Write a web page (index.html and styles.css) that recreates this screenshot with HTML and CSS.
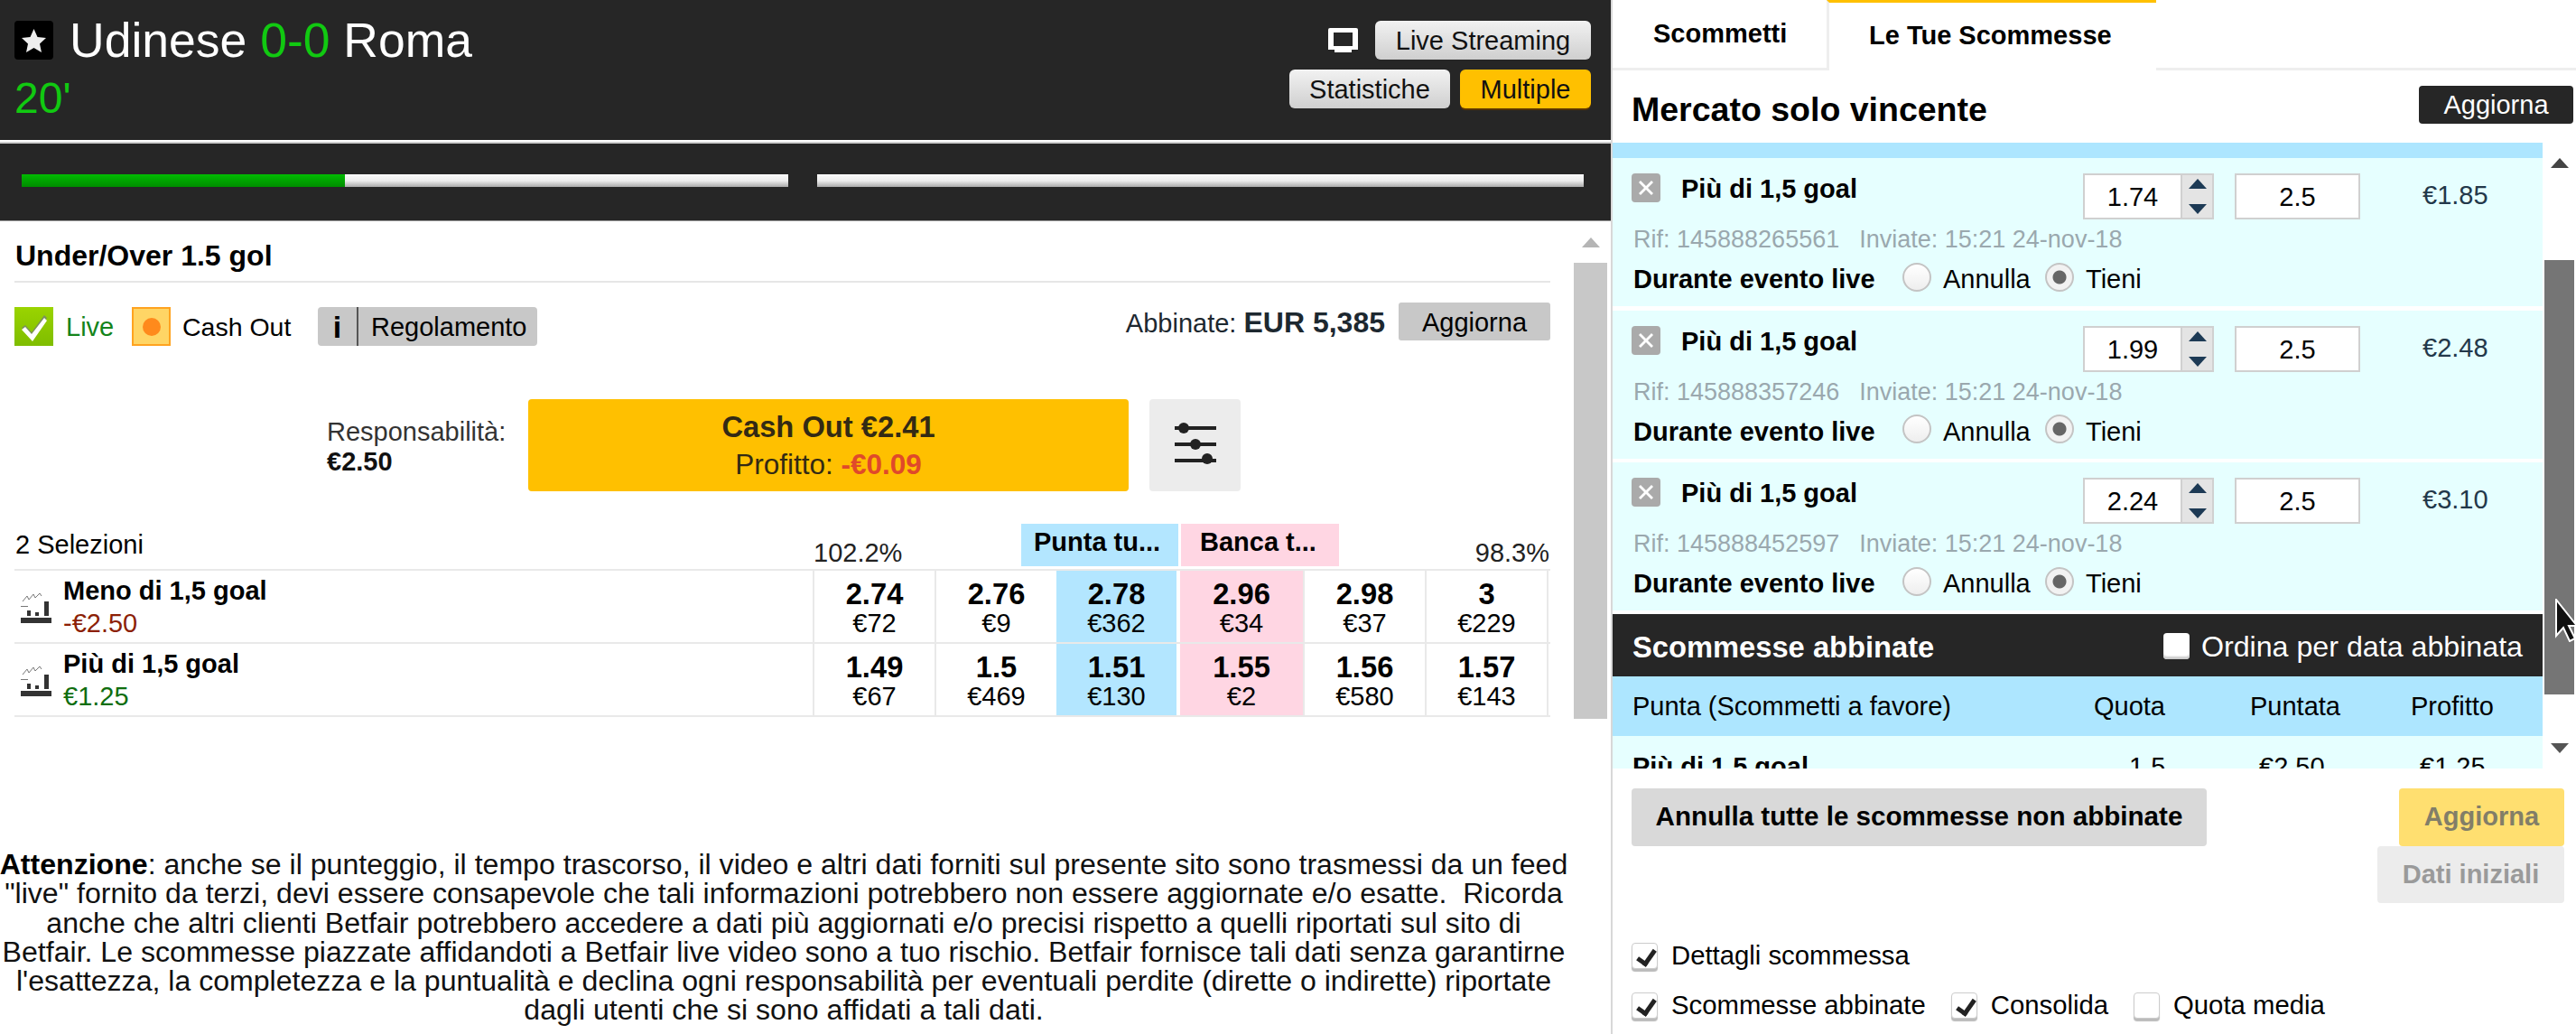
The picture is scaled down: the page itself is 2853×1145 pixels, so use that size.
FILE: index.html
```html
<!DOCTYPE html>
<html lang="it">
<head>
    <meta charset="UTF-8">
    <title>Udinese 0-0 Roma</title>
    <link rel="stylesheet" href="styles.css">
</head>
<body>
<div class="app">
    <div class="left">
        <div class="match-head">
            <div class="match-info">
                <div class="match-title">
                    <span class="star-box"><svg width="43" height="43" viewBox="0 0 43 43"><path d="M21.5 9l4 9 9.500 1-7 6.500 2 9.500-8.500-5-8.500 5 2-9.500-7-6.500 9.500-1z" fill="#eee"/></svg></span>
                    <span class="teams">Udinese <span class="score">0-0</span> Roma</span>
                </div>
                <div class="match-time">20'</div>
            </div>
            <div class="match-actions">
                <div class="action-row">
                    <svg class="tv-icon" width="33" height="27" viewBox="0 0 33 27"><path d="M2 0h29a2 2 0 0 1 2 2v22h-7v3H7v-3H0V2a2 2 0 0 1 2-2z" fill="#fff"/><rect x="6" y="5" width="21" height="15" fill="#262626"/></svg>
                    <span class="head-btn btn-streaming">Live Streaming</span>
                </div>
                <div class="action-row action-row-tight">
                    <span class="head-btn btn-stats">Statistiche</span>
                    <span class="head-btn btn-multi">Multiple</span>
                </div>
            </div>
        </div>
        <div class="head-sep"></div>
        <div class="progress">
            <div class="bar"><div class="bar-fill"></div></div>
            <div class="bar"></div>
        </div>

        <div class="market">
            <div class="market-main">
                <div class="market-title">Under/Over 1.5 gol</div>
                <div class="filter-row">
                    <div class="filter-left">
                        <span class="ico-live"><svg width="43" height="43" viewBox="0 0 43 43"><path d="M8 23l4-3 7 8L33 9l3 3-16 24z" fill="#7a8f60"/><path d="M8 25l4-3 7 8L33 12l3 3-16 23z" fill="#fff"/></svg></span>
                        <span class="live-text">Live</span>
                        <span class="ico-cash"><span class="ico-cash-dot"></span></span>
                        <span class="cash-text">Cash Out</span>
                        <span class="rules-btn"><span class="rules-i">i</span><span class="rules-label">Regolamento</span></span>
                    </div>
                    <div class="filter-right">
                        <span class="matched">Abbinate: <b>EUR 5,385</b></span>
                        <span class="refresh-btn">Aggiorna</span>
                    </div>
                </div>
                <div class="cash-row">
                    <div class="liability">Responsabilità:<br><b>€2.50</b></div>
                    <div class="cash-btn">
                        <div class="cash-main">Cash Out €2.41</div>
                        <div class="cash-sub">Profitto: <b>-€0.09</b></div>
                    </div>
                    <div class="sliders-btn">
                        <svg class="sliders-icon" width="46" height="46" viewBox="0 0 46 46" fill="#222"><rect y="4" width="46" height="4"/><rect y="22" width="46" height="4"/><rect y="40" width="46" height="4"/><circle cx="10" cy="6" r="6"/><circle cx="23" cy="24" r="6"/><circle cx="36" cy="40" r="6"/></svg>
                    </div>
                </div>
                <div class="sel-head">
                    <span class="sel-count">2 Selezioni</span>
                    <span class="pct pct-left">102.2%</span>
                    <span class="side-tab side-back">Punta tu...</span>
                    <span class="side-tab side-lay">Banca t...</span>
                    <span class="pct pct-right">98.3%</span>
                </div>
                <div class="runner">
                    <div class="runner-name">
                        <svg class="chart-icon" width="36" height="36" viewBox="0 0 36 36"><path d="M3 12l5-6 2 4 5-6 2 4 5-5 2 3" fill="none" stroke="#777" stroke-width="1"/><path d="M1 17h8v1H1z" fill="#777"/><path d="M8 22h4v6H8zM17 24h4v4h-4zM27 12h5v16h-5zM1 30h34v6H1z" fill="#333"/></svg>
                        <div>
                            <div class="runner-title">Meno di 1,5 goal</div>
                            <div class="runner-pl loss">-€2.50</div>
                        </div>
                    </div>
                    <div class="cell"><b>2.74</b><span>€72</span></div>
                    <div class="cell"><b>2.76</b><span>€9</span></div>
                    <div class="cell cell-back"><b>2.78</b><span>€362</span></div>
                    <div class="cell cell-lay"><b>2.96</b><span>€34</span></div>
                    <div class="cell"><b>2.98</b><span>€37</span></div>
                    <div class="cell"><b>3</b><span>€229</span></div>
                </div>
                <div class="runner">
                    <div class="runner-name">
                        <svg class="chart-icon" width="36" height="36" viewBox="0 0 36 36"><path d="M3 12l5-6 2 4 5-6 2 4 5-5 2 3" fill="none" stroke="#777" stroke-width="1"/><path d="M1 17h8v1H1z" fill="#777"/><path d="M8 22h4v6H8zM17 24h4v4h-4zM27 12h5v16h-5zM1 30h34v6H1z" fill="#333"/></svg>
                        <div>
                            <div class="runner-title">Più di 1,5 goal</div>
                            <div class="runner-pl win">€1.25</div>
                        </div>
                    </div>
                    <div class="cell"><b>1.49</b><span>€67</span></div>
                    <div class="cell"><b>1.5</b><span>€469</span></div>
                    <div class="cell cell-back"><b>1.51</b><span>€130</span></div>
                    <div class="cell cell-lay"><b>1.55</b><span>€2</span></div>
                    <div class="cell"><b>1.56</b><span>€580</span></div>
                    <div class="cell"><b>1.57</b><span>€143</span></div>
                </div>
            </div>
            <div class="market-scroll">
                <span class="arrow-up arrow-light"></span>
                <span class="market-thumb"></span>
            </div>
        </div>

        <p class="notice"><b>Attenzione</b>: anche se il punteggio, il tempo trascorso, il video e altri dati forniti sul presente sito sono trasmessi da un feed "live" fornito da terzi, devi essere consapevole che tali informazioni potrebbero non essere aggiornate e/o esatte.&nbsp; Ricorda anche che altri clienti Betfair potrebbero accedere a dati più aggiornati e/o precisi rispetto a quelli riportati sul sito di Betfair. Le scommesse piazzate affidandoti a Betfair live video sono a tuo rischio. Betfair fornisce tali dati senza garantirne l'esattezza, la completezza e la puntualità e declina ogni responsabilità per eventuali perdite (dirette o indirette) riportate dagli utenti che si sono affidati a tali dati.</p>
    </div>

    <div class="right">
        <div class="tabs">
            <div class="tab">Scommetti</div>
            <div class="tab tab-active">Le Tue Scommesse</div>
        </div>
        <div class="slip-head">
            <span class="slip-title">Mercato solo vincente</span>
            <span class="slip-refresh">Aggiorna</span>
        </div>
        <div class="slip-body">
            <div class="slip-list">
                <div class="slip-band"></div>

                <div class="bet">
                    <div class="bet-top">
                        <span class="bet-x"><svg width="32" height="32" viewBox="0 0 32 32"><path d="M10 8l6 6 6-6 2 2-6 6 6 6-2 2-6-6-6 6-2-2 6-6-6-6z" fill="#fff"/></svg></span>
                        <span class="bet-name">Più di 1,5 goal</span>
                        <span class="odds-box">1.74</span>
                        <span class="spinner"><i class="spin-up"></i><i class="spin-down"></i></span>
                        <span class="stake-box">2.5</span>
                        <span class="bet-price">€1.85</span>
                    </div>
                    <div class="bet-ref"><span class="ref-id">Rif: 145888265561</span><span>Inviate: 15:21 24-nov-18</span></div>
                    <div class="bet-live">
                        <b class="live-label">Durante evento live</b>
                        <span class="radio"></span><span class="radio-text">Annulla</span>
                        <span class="radio radio-on"></span><span class="radio-text">Tieni</span>
                    </div>
                </div>

                <div class="bet">
                    <div class="bet-top">
                        <span class="bet-x"><svg width="32" height="32" viewBox="0 0 32 32"><path d="M10 8l6 6 6-6 2 2-6 6 6 6-2 2-6-6-6 6-2-2 6-6-6-6z" fill="#fff"/></svg></span>
                        <span class="bet-name">Più di 1,5 goal</span>
                        <span class="odds-box">1.99</span>
                        <span class="spinner"><i class="spin-up"></i><i class="spin-down"></i></span>
                        <span class="stake-box">2.5</span>
                        <span class="bet-price">€2.48</span>
                    </div>
                    <div class="bet-ref"><span class="ref-id">Rif: 145888357246</span><span>Inviate: 15:21 24-nov-18</span></div>
                    <div class="bet-live">
                        <b class="live-label">Durante evento live</b>
                        <span class="radio"></span><span class="radio-text">Annulla</span>
                        <span class="radio radio-on"></span><span class="radio-text">Tieni</span>
                    </div>
                </div>

                <div class="bet bet-last">
                    <div class="bet-top">
                        <span class="bet-x"><svg width="32" height="32" viewBox="0 0 32 32"><path d="M10 8l6 6 6-6 2 2-6 6 6 6-2 2-6-6-6 6-2-2 6-6-6-6z" fill="#fff"/></svg></span>
                        <span class="bet-name">Più di 1,5 goal</span>
                        <span class="odds-box">2.24</span>
                        <span class="spinner"><i class="spin-up"></i><i class="spin-down"></i></span>
                        <span class="stake-box">2.5</span>
                        <span class="bet-price">€3.10</span>
                    </div>
                    <div class="bet-ref"><span class="ref-id">Rif: 145888452597</span><span>Inviate: 15:21 24-nov-18</span></div>
                    <div class="bet-live">
                        <b class="live-label">Durante evento live</b>
                        <span class="radio"></span><span class="radio-text">Annulla</span>
                        <span class="radio radio-on"></span><span class="radio-text">Tieni</span>
                    </div>
                </div>

                <div class="matched-head">
                    <b>Scommesse abbinate</b>
                    <span class="matched-sort"><span class="check check-flat"></span>Ordina per data abbinata</span>
                </div>
                <div class="matched-cols">
                    <span class="col-side">Punta (Scommetti a favore)</span>
                    <span class="col-odds">Quota</span>
                    <span class="col-stake">Puntata</span>
                    <span class="col-profit">Profitto</span>
                </div>
                <div class="matched-row">
                    <b class="col-side">Più di 1,5 goal</b>
                    <span class="col-odds">1.5</span>
                    <span class="col-stake">€2.50</span>
                    <span class="col-profit">€1.25</span>
                </div>
            </div>
            <div class="slip-scroll">
                <span class="arrow-up"></span>
                <span class="slip-thumb"></span>
                <span class="arrow-down"></span>
            </div>
        </div>
        <div class="slip-actions">
            <span class="cancel-all">Annulla tutte le scommesse non abbinate</span>
            <div class="slip-actions-right">
                <span class="update-btn">Aggiorna</span>
                <span class="reset-btn">Dati iniziali</span>
            </div>
        </div>
        <div class="options">
            <div class="option-row">
                <span class="check check-on"></span><span class="option-label">Dettagli scommessa</span>
            </div>
            <div class="option-row">
                <span class="check check-on"></span><span class="option-label">Scommesse abbinate</span>
                <span class="check check-on"></span><span class="option-label">Consolida</span>
                <span class="check"></span><span class="option-label">Quota media</span>
            </div>
        </div>
    </div>

    <svg class="cursor" width="24" height="48" viewBox="0 0 24 48"><path d="M1 1v40l8-9 7 15 6-3-7-14h9z" fill="#111" stroke="#fff" stroke-width="2"/></svg>
</div>
</body>
</html>
```

FILE: styles.css
```css
* {
    box-sizing: border-box;
}
html, body {
    margin: 0;
    padding: 0;
}
body {
    font-family: "Liberation Sans", Arial, sans-serif;
    font-size: 29px;
    color: #000;
    background: #fff;
}
.app {
    position: relative;
    display: flex;
    width: 2853px;
    height: 1145px;
    overflow: hidden;
}
.left {
    width: 1784px;
    flex: none;
}
.right {
    width: 1069px;
    flex: none;
    border-left: 2px solid #d8d8d8;
}

/* match header */
.match-head {
    height: 155px;
    background: #262626;
    display: flex;
    justify-content: space-between;
    padding: 23px 22px 0 16px;
}
.match-title {
    display: flex;
    align-items: center;
    height: 43px;
}
.star-box {
    width: 43px;
    height: 43px;
    background: #000;
    border-radius: 4px;
    margin-right: 18px;
}
.teams {
    font-size: 53.500px;
    line-height: 43px;
    color: #fff;
}
.score,
.match-time {
    color: #11c911;
}
.match-time {
    font-size: 48px;
    line-height: 50px;
    margin-top: 18px;
}
.match-actions {
    display: flex;
    flex-direction: column;
    align-items: flex-end;
    gap: 11px;
}
.action-row {
    display: flex;
    align-items: center;
    gap: 19px;
}
.action-row-tight {
    gap: 11px;
}
.head-btn {
    height: 43px;
    line-height: 45px;
    text-align: center;
    border-radius: 6px;
    background: linear-gradient(#f2f2f2, #cfcfcf);
    color: #111;
}
.btn-streaming {
    width: 239px;
}
.btn-stats {
    width: 178px;
}
.btn-multi {
    width: 145px;
    background: #ffc000;
    box-shadow: 0 2px 0 #5a3500;
}
.head-sep {
    height: 4px;
    background: #cfcfcf;
    border-top: 2px solid #fff;
}
.progress {
    height: 86px;
    background: #262626;
    display: flex;
    gap: 32px;
    padding: 34px 0 0 24px;
    border-bottom: 1px solid #999;
}
.bar {
    width: 849px;
    height: 14px;
    background: linear-gradient(#fafafa, #ededed 50%, #aaa);
}
.bar-fill {
    width: 358px;
    height: 14px;
    background: linear-gradient(#00bb00, #008c00);
}

/* market */
.market {
    display: flex;
    height: 551px;
}
.market-main {
    width: 1717px;
    padding-left: 16px;
}
.market-scroll {
    width: 37px;
    margin-left: 26px;
    display: flex;
    flex-direction: column;
    align-items: center;
    padding-top: 18px;
}
.market-thumb {
    width: 37px;
    height: 506px;
    margin-top: 17px;
    background: #c8c8c8;
}
.arrow-up,
.arrow-down {
    width: 0;
    height: 0;
    border-left: 10px solid transparent;
    border-right: 10px solid transparent;
    flex: none;
}
.arrow-up {
    border-bottom: 11px solid #444;
}
.arrow-down {
    border-top: 11px solid #555;
}
.arrow-light {
    border-bottom-color: #b5b5b5;
}
.market-title {
    height: 68px;
    border-bottom: 2px solid #e6e6e6;
    padding: 20px 0 0 1px;
    font-size: 32px;
    line-height: 36px;
    font-weight: bold;
}
.filter-row {
    display: flex;
    justify-content: space-between;
    height: 48px;
    margin-top: 22px;
}
.filter-left {
    display: flex;
    align-items: center;
    height: 43px;
    margin-top: 5px;
    line-height: 46px;
}
.ico-live {
    width: 43px;
    height: 43px;
    background: linear-gradient(#9ad400, #7fbd00);
    margin-right: 14px;
}
.live-text {
    color: #14841a;
    width: 73px;
}
.ico-cash {
    width: 43px;
    height: 43px;
    display: flex;
    align-items: center;
    justify-content: center;
    background: #ffd565;
    border: 2px solid #ffa320;
    margin-right: 13px;
}
.ico-cash-dot {
    width: 20px;
    height: 20px;
    border-radius: 50%;
    background: #ff8a1c;
}
.cash-text {
    width: 150px;
    font-size: 28.500px;
}
.rules-btn {
    display: flex;
    width: 243px;
    height: 43px;
    line-height: 45px;
    background: #c8c8c8;
    border-radius: 4px;
}
.rules-i {
    width: 45px;
    text-align: center;
    font-size: 34px;
    font-weight: bold;
    border-right: 2px solid #555;
}
.rules-label {
    padding-left: 14px;
}
.filter-right {
    display: flex;
    align-items: flex-start;
    gap: 15px;
}
.matched {
    line-height: 44px;
    color: #1d2830;
}
.matched b {
    font-size: 32px;
}
.refresh-btn {
    width: 168px;
    height: 42px;
    line-height: 44px;
    text-align: center;
    background: #c8c8c8;
    border-radius: 3px;
}
.cash-row {
    display: flex;
    height: 102px;
    margin-top: 59px;
    padding-left: 346px;
}
.liability {
    width: 223px;
    padding-top: 20px;
    line-height: 33px;
    color: #333;
}
.liability b {
    color: #111;
}
.cash-btn {
    width: 665px;
    height: 102px;
    text-align: center;
    background: #ffc000;
    border-radius: 4px;
    color: #332a14;
    padding-top: 10px;
}
.cash-main {
    font-size: 32.700px;
    font-weight: bold;
    line-height: 42px;
}
.cash-sub {
    font-size: 31.500px;
    line-height: 40px;
}
.cash-sub b {
    color: #e0492a;
}
.sliders-btn {
    width: 101px;
    height: 102px;
    margin-left: 23px;
    background: #ececec;
    border-radius: 4px;
    display: flex;
    align-items: center;
    justify-content: center;
}
.sliders-icon {
    margin-bottom: 4px;
}
.sel-head {
    display: flex;
    height: 47px;
    margin-top: 36px;
    align-items: flex-end;
}
.sel-count {
    width: 885px;
    padding-left: 1px;
    align-self: flex-start;
    line-height: 32px;
    margin-top: 7px;
}
.pct {
    line-height: 30px;
    color: #222;
}
.pct-left {
    width: 230px;
}
.pct-right {
    flex: 1;
    text-align: right;
    padding-right: 1px;
}
.side-tab {
    height: 47px;
    line-height: 40px;
    font-weight: bold;
    padding-left: 14px;
    width: 174px;
}
.side-back {
    background: #b3e6ff;
}
.side-lay {
    background: #ffd6e3;
    margin-left: 3px;
    width: 175px;
    padding-left: 21px;
}
.runner {
    display: flex;
    height: 81px;
    border-bottom: 2px solid #e9e9e9;
}
.sel-head + .runner {
    margin-top: 3px;
    border-top: 2px solid #e9e9e9;
    height: 83px;
}
.runner-name {
    width: 884px;
    display: flex;
    align-items: center;
    padding-left: 6px;
}
.chart-icon {
    margin-right: 12px;
    flex: none;
}
.runner-title {
    font-weight: bold;
    line-height: 36px;
}
.runner-pl {
    line-height: 36px;
}
.loss {
    color: #8c1f06;
}
.win {
    color: #0f6e0f;
}
.cell {
    width: 135px;
    border-left: 2px solid #e9e9e9;
    text-align: center;
    padding-top: 8px;
}
.cell:last-child {
    width: 137px;
    border-right: 2px solid #e9e9e9;
}
.cell b {
    display: block;
    font-size: 32.700px;
    line-height: 36px;
}
.cell span {
    display: block;
    line-height: 28px;
}
.cell-back {
    background: #b3e6ff;
    border-left: 0;
    margin-left: 0;
    width: 133px;
}
.cell-lay {
    background: #ffd6e3;
    border-left: 0;
    margin-left: 4px;
    width: 136px;
}
.notice {
    margin: 145px 0 0 -3px;
    width: 1742px;
    font-size: 32.100px;
    line-height: 32.300px;
    text-align: center;
    color: #111;
}
.notice b {
    color: #000;
}

/* right panel */
.tabs {
    display: flex;
    height: 78px;
    border-bottom: 3px solid #eee;
}
.tab {
    width: 237px;
    height: 75px;
    font-weight: bold;
    line-height: 75px;
    padding-left: 45px;
}
.tab-active {
    width: 365px;
    height: 78px;
    padding-left: 44px;
    background: #fff;
    border-top: 3px solid #ffc000;
    border-left: 3px solid #eee;
    line-height: 72px;
}
.slip-head {
    display: flex;
    justify-content: space-between;
    height: 80px;
    padding: 17px 3px 0 21px;
}
.slip-title {
    font-size: 37.500px;
    font-weight: bold;
    line-height: 42px;
    padding-top: 5px;
}
.slip-refresh {
    width: 171px;
    height: 42px;
    line-height: 42px;
    text-align: center;
    color: #fff;
    background: #262626;
    border-radius: 4px;
}
.slip-body {
    display: flex;
    height: 693px;
}
.slip-list {
    width: 1030px;
    overflow: hidden;
}
.slip-band {
    height: 17px;
    background: #ade6ff;
}
.slip-scroll {
    width: 33px;
    margin-left: 2px;
    display: flex;
    flex-direction: column;
    align-items: center;
    padding-top: 17px;
}
.slip-thumb {
    width: 33px;
    height: 481px;
    margin: 102px 0 54px;
    background: #757575;
}
.bet {
    height: 164px;
    margin-bottom: 4.500px;
    background: #e6ffff;
    padding: 17px 0 0 21px;
}
.bet-last {
    margin-bottom: 4px;
}
.bet-top {
    display: flex;
    align-items: flex-start;
    height: 51px;
}
.bet-x {
    width: 32px;
    height: 32px;
    background: #aaa;
    border-radius: 4px;
    flex: none;
}
.bet-name {
    width: 468px;
    padding-left: 23px;
    font-weight: bold;
    line-height: 34px;
}
.odds-box,
.stake-box {
    height: 51px;
    line-height: 49px;
    text-align: center;
    background: #fff;
    border: 2px solid #d0d0d0;
}
.odds-box {
    width: 110px;
}
.stake-box {
    width: 139px;
    margin-left: 23px;
}
.spinner {
    width: 35px;
    height: 51px;
    background: #e4e4e4;
    border: 2px solid #d0d0d0;
    border-left: 0;
    display: flex;
    flex-direction: column;
    align-items: center;
    justify-content: space-between;
    padding: 4px 0;
}
.spin-up,
.spin-down {
    width: 0;
    height: 0;
    border-left: 10px solid transparent;
    border-right: 10px solid transparent;
}
.spin-up {
    border-bottom: 11px solid #1d3a55;
}
.spin-down {
    border-top: 11px solid #1d3a55;
}
.bet-price {
    margin-left: 69px;
    line-height: 48px;
    color: #23384a;
}
.bet-ref {
    margin-top: 6px;
    font-size: 27px;
    line-height: 32px;
    color: #9aa8ae;
    padding-left: 2px;
}
.ref-id {
    margin-right: 22px;
}
.bet-live {
    display: flex;
    align-items: center;
    height: 33px;
    margin-top: 9px;
    padding-left: 2px;
}
.live-label {
    width: 298px;
    padding-top: 6px;
}
.radio {
    width: 32px;
    height: 32px;
    flex: none;
    border-radius: 50%;
    background: linear-gradient(#fff, #eee);
    border: 2px solid #c4c4c4;
}
.radio-on {
    background: radial-gradient(circle, #666 0 7px, #f2f2f2 8px);
}
.radio-text {
    width: 126px;
    padding: 6px 0 0 13px;
}
.matched-head {
    display: flex;
    justify-content: space-between;
    align-items: center;
    height: 69px;
    padding: 0 22px;
    background: #262626;
    color: #fff;
}
.matched-head b {
    font-size: 32.700px;
    padding-top: 4px;
}
.matched-sort {
    display: flex;
    align-items: center;
    gap: 13px;
    font-size: 32.200px;
    line-height: 42px;
    padding-top: 2px;
}
.matched-cols,
.matched-row {
    display: flex;
    padding-left: 22px;
}
.matched-cols {
    height: 66px;
    align-items: center;
    background: #ade6ff;
}
.matched-row {
    height: 60px;
    padding-top: 18px;
    background: #e6ffff;
}
.col-side {
    width: 511px;
}
.col-odds {
    width: 173px;
}
.col-stake {
    width: 178px;
}
.matched-row .col-odds {
    padding-left: 39px;
}
.matched-row .col-stake {
    padding-left: 10px;
}
.matched-row .col-profit {
    padding-left: 10px;
}
.slip-actions {
    display: flex;
    justify-content: space-between;
    padding: 22px 13px 0 21px;
}
.cancel-all {
    width: 637px;
    height: 64px;
    line-height: 62px;
    text-align: center;
    font-size: 29.600px;
    font-weight: bold;
    background: #d9d9d9;
    border-radius: 4px;
}
.slip-actions-right {
    display: flex;
    flex-direction: column;
    align-items: flex-end;
}
.update-btn,
.reset-btn {
    height: 63.500px;
    line-height: 62px;
    text-align: center;
    font-weight: bold;
    border-radius: 4px;
}
.update-btn {
    width: 183px;
    background: #ffdf70;
    color: #827e68;
}
.reset-btn {
    width: 207px;
    background: #ececec;
    color: #9a9a9a;
}
.options {
    padding: 43px 0 0 21px;
}
.option-row {
    display: flex;
    align-items: center;
    height: 30px;
    margin-bottom: 25px;
    font-size: 29.300px;
    line-height: 32px;
}
.check {
    width: 29px;
    height: 29px;
    flex: none;
    position: relative;
    border-radius: 4px;
    background: #fff;
    border: 1px solid #ccc;
    box-shadow: 0 3px 1px #bbb;
}
.check-flat {
    border: 0;
    box-shadow: inset 0 -3px 2px #ccc;
}
.check-on::after {
    content: "";
    position: absolute;
    left: 9px;
    top: 3px;
    width: 8px;
    height: 16px;
    border: solid #222;
    border-width: 0 5px 5px 0;
    transform: rotate(35deg);
}
.option-label {
    padding: 0 28px 0 15px;
}
.cursor {
    position: absolute;
    left: 2830px;
    top: 663px;
}
```
